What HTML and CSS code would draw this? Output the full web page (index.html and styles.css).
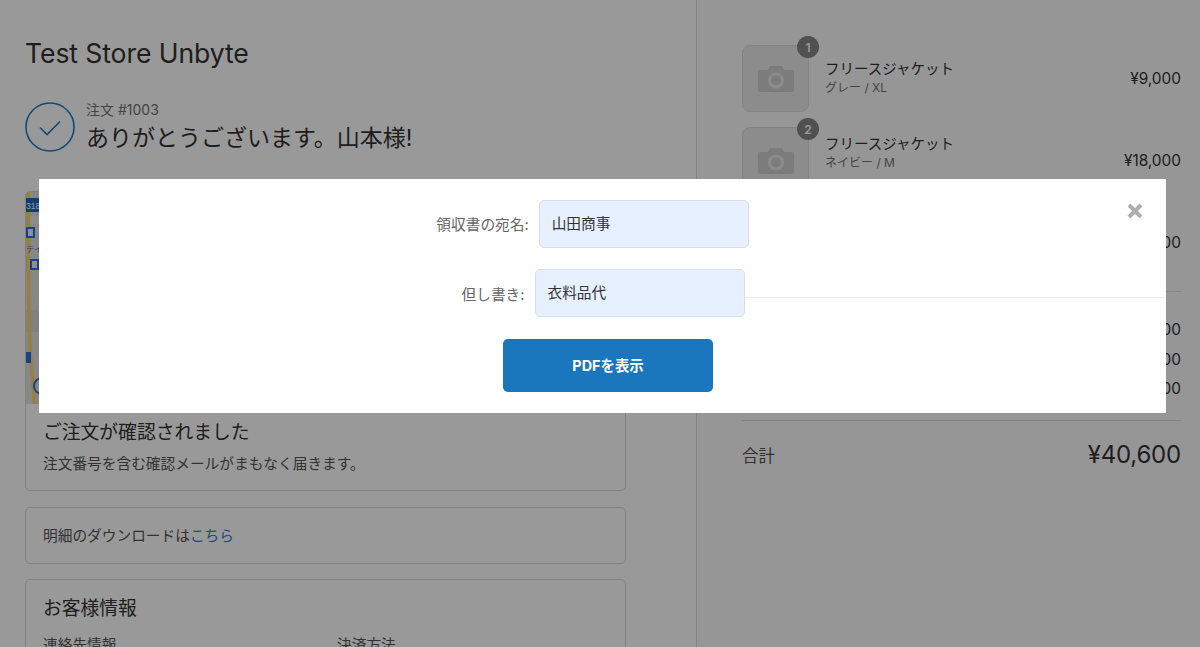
FILE: index.html
```html
<!DOCTYPE html>
<html lang="ja">
<head>
<meta charset="utf-8">
<title>ご注文ありがとうございます</title>
<link rel="stylesheet" href="styles.css">
</head>
<body>
<div class="page">
  <main class="main">
    <h1 class="store">Test Store Unbyte</h1>
    <div class="thanks">
      <svg class="check" viewBox="0 0 50 50" width="50" height="50"><circle cx="25" cy="25" r="24" fill="none" stroke="#1f7cc4" stroke-width="1.600"/><path d="M15 25.500l7 7 13-13" fill="none" stroke="#1f7cc4" stroke-width="1.600"/></svg>
      <div>
        <div class="order-no">注文 #1003</div>
        <div class="thanks-title">ありがとうございます。山本様!</div>
      </div>
    </div>
    <section class="card card-confirm">
      <svg class="map" viewBox="0 0 600 212" width="600" height="212">
        <rect width="600" height="212" fill="#e2e2e0"/>
        <rect y="24" width="14" height="8" fill="#ececea"/>
        <rect y="118" width="14" height="22" fill="#d6d6d4"/>
        <path d="M2 0L2.500 93L4 160L9 212" fill="none" stroke="#f3d47c" stroke-width="4"/>
        <rect x="0" y="6" width="14" height="14" fill="#1f66c4"/>
        <text x="0" y="16.500" class="map-road">318</text>
        <rect x="0" y="35" width="9" height="11" fill="#2a6fdc"/>
        <rect x="2" y="37" width="5" height="7" fill="#e8eefb"/>
        <rect x="4" y="67" width="9" height="11" fill="#2a6fdc"/>
        <rect x="6" y="69" width="5" height="7" fill="#e8eefb"/>
        <rect x="0" y="160" width="5" height="11" fill="#2a6fdc"/>
        <text x="0" y="60" class="map-label">テイ</text>
        <circle cx="16" cy="194" r="8" fill="none" stroke="#2a6fdc" stroke-width="2"/>
      </svg>
      <div class="card-body">
        <h2 class="card-title">ご注文が確認されました</h2>
        <p class="card-text">注文番号を含む確認メールがまもなく届きます。</p>
      </div>
    </section>
    <section class="card card-download">
      <p class="card-text">明細のダウンロードは<a class="link" href="#">こちら</a></p>
    </section>
    <section class="card card-customer">
      <h2 class="card-title">お客様情報</h2>
      <div class="info-grid">
        <div class="card-text">連絡先情報</div>
        <div class="card-text">決済方法</div>
      </div>
    </section>
  </main>
  <aside class="side">
    <div class="item">
      <div class="thumb">
        <svg viewBox="0 0 36 26" width="36" height="26"><use href="#cam"/></svg>
        <span class="badge">1</span>
      </div>
      <div class="item-info"><div class="item-name">フリースジャケット</div><div class="item-variant">グレー / XL</div></div>
      <div class="price">¥9,000</div>
    </div>
    <div class="item">
      <div class="thumb">
        <svg viewBox="0 0 36 26" width="36" height="26"><use href="#cam"/></svg>
        <span class="badge">2</span>
      </div>
      <div class="item-info item-info-up"><div class="item-name">フリースジャケット</div><div class="item-variant">ネイビー / M</div></div>
      <div class="price">¥18,000</div>
    </div>
    <div class="item">
      <div class="thumb">
        <svg viewBox="0 0 36 26" width="36" height="26"><use href="#cam"/></svg>
        <span class="badge">1</span>
      </div>
      <div class="item-info"><div class="item-name">フリースジャケット</div></div>
      <div class="price">¥9,000</div>
    </div>
    <div class="rows">
      <div class="row"><span>小計</span><span class="price">¥36,000</span></div>
      <div class="row"><span>配送料</span><span class="price">¥1,000</span></div>
      <div class="row"><span>消費税</span><span class="price">¥3,600</span></div>
    </div>
    <div class="total"><span class="total-label">合計</span><span class="total-price">¥40,600</span></div>
  </aside>
</div>
<svg class="defs" width="0" height="0"><defs><symbol id="cam" viewBox="0 0 36 26"><path fill-rule="evenodd" fill="#cfcfcf" d="M2 4h8l2-4h12l2 4h8a2 2 0 0 1 2 2v18a2 2 0 0 1-2 2H2a2 2 0 0 1-2-2V6a2 2 0 0 1 2-2zM18 6.500a8 8 0 1 0 0 16a8 8 0 0 0 0-16zM18 9.500a5 5 0 1 1 0 10a5 5 0 0 1 0-10z"/></symbol></defs></svg>
<div class="overlay">
  <div class="modal">
    <span class="ghost-line"></span>
    <svg class="close" viewBox="0 0 16 16" width="16" height="16"><path d="M2 2l12 12M14 2L2 14" stroke="#aeaeae" stroke-width="4" fill="none"/></svg>
    <div class="form-row row-name"><span class="form-label label-up">領収書の宛名:</span><div class="field">山田商事</div></div>
    <div class="form-row row-note"><span class="form-label">但し書き:</span><div class="field field-tight">衣料品代</div></div>
    <button class="pdf-btn" type="button">PDFを表示</button>
  </div>
</div>
</body>
</html>
```
FILE: styles.css
```css
* { box-sizing: border-box; }
html, body { margin: 0; height: 100%; overflow: hidden; }
body {
  font-family: Inter, "Noto Sans CJK JP", sans-serif;
  color: #333;
  background: #fff;
}
h1, h2, p { margin: 0; font-weight: 400; }
.page { display: flex; height: 647px; overflow: hidden; }
.main { width: 697px; flex: none; padding: 37px 70px 0 25px; border-right: 1px solid #d9d9d9; }
.store { font-size: 26.600px; line-height: 32px; color: #333; letter-spacing: -.1px; }
.thanks { display: flex; gap: 11px; margin-top: 33px; }
.check { flex: none; }
.order-no { font-size: 14px; line-height: 16px; color: #737373; }
.thanks-title { font-size: 23px; line-height: 34px; margin-top: 3px; color: #333; }
.card { width: 601px; border: 1px solid #d9d9d9; border-radius: 5px; overflow: hidden; }
.card-confirm { margin-top: 36px; height: 300px; }
.map { display: block; }
.card-body { padding: 16px 17px; }
.card-title { font-size: 18.800px; line-height: 26px; color: #333; }
.card-text { font-size: 14.700px; line-height: 20px; color: #545454; }
.card-body .card-text { margin-top: 8px; }
.card-download { margin-top: 16px; height: 57px; padding: 18px 17px; }
.link { color: #2f7fd0; text-decoration: none; }
.card-customer { margin-top: 15px; height: 120px; padding: 16px 17px; }
.info-grid { display: grid; grid-template-columns: 294px 1fr; margin-top: 13px; }
.map-road { font: 8.500px "Liberation Sans", sans-serif; fill: #fff; }
.map-label { font: 8px "Noto Sans CJK JP", sans-serif; fill: #2a6fdc; }

.side { flex: 1; background: #fafafa; padding: 45px 19px 0 45px; }
.item { display: flex; align-items: center; height: 67px; margin-bottom: 15px; }
.thumb { position: relative; width: 67px; height: 67px; flex: none; background: #eaeaea; border: 1px solid #dadada; border-radius: 8px; display: flex; align-items: center; justify-content: center; }
.badge { position: absolute; top: -10px; right: -11px; width: 22px; height: 22px; border-radius: 50%; background: #858585; color: #fff; font-size: 12px; font-weight: 600; display: flex; align-items: center; justify-content: center; }
.item-info { margin-left: 16px; margin-bottom: 3px; flex: 1; }
.item-info-up { margin-bottom: 17px; }
.item-name { font-size: 14.500px; line-height: 21px; color: #333; }
.item-variant { font-size: 12px; line-height: 18px; color: #737373; }
.price { font-size: 15.400px; color: #333; }
.rows { border-top: 1px solid #e3e3e3; margin-top: 10px; padding: 23px 0 16px; border-bottom: 1px solid #d9d9d9; }
.row { display: flex; justify-content: space-between; height: 29.500px; line-height: 29px; font-size: 14.400px; }
.total { display: flex; justify-content: space-between; align-items: center; margin-top: 17px; height: 34px; }
.total-label { font-size: 16.500px; color: #545454; }
.total-price { font-size: 24px; color: #333; letter-spacing: -.2px; }

.overlay { position: fixed; inset: 0; background: rgba(0, 0, 0, .4); }
.defs { position: absolute; }
.modal { position: absolute; left: 39px; top: 179px; width: 1127px; height: 234px; background: #fff; display: flex; flex-direction: column; align-items: center; padding-top: 21px; }
.ghost-line { position: absolute; left: 700px; right: 0; top: 118px; height: 1px; background: #eee; }
.close { position: absolute; right: 23px; top: 24px; }
.form-row { position: relative; display: flex; align-items: center; gap: 10px; }
.row-name { margin-left: -20px; }
.row-note { margin-top: 21px; margin-left: 2px; gap: 11px; }
.form-label { font-size: 14.700px; color: #666; white-space: nowrap; }
.label-up { margin-bottom: 2px; }
.field { width: 210px; height: 48px; background: #e6f0ff; border: 1px solid #d8e0ea; border-radius: 5px; padding: 0 12px; font-size: 14.700px; line-height: 46px; color: #333; }
.field-tight { padding: 0 11px; }
.pdf-btn { margin-top: 22px; margin-left: 11px; width: 210px; height: 53px; padding: 0 0 3px; background: #1a76bd; color: #fff; border: 0; border-radius: 5px; font: 700 14.400px Inter, "Noto Sans CJK JP", sans-serif; }
```
